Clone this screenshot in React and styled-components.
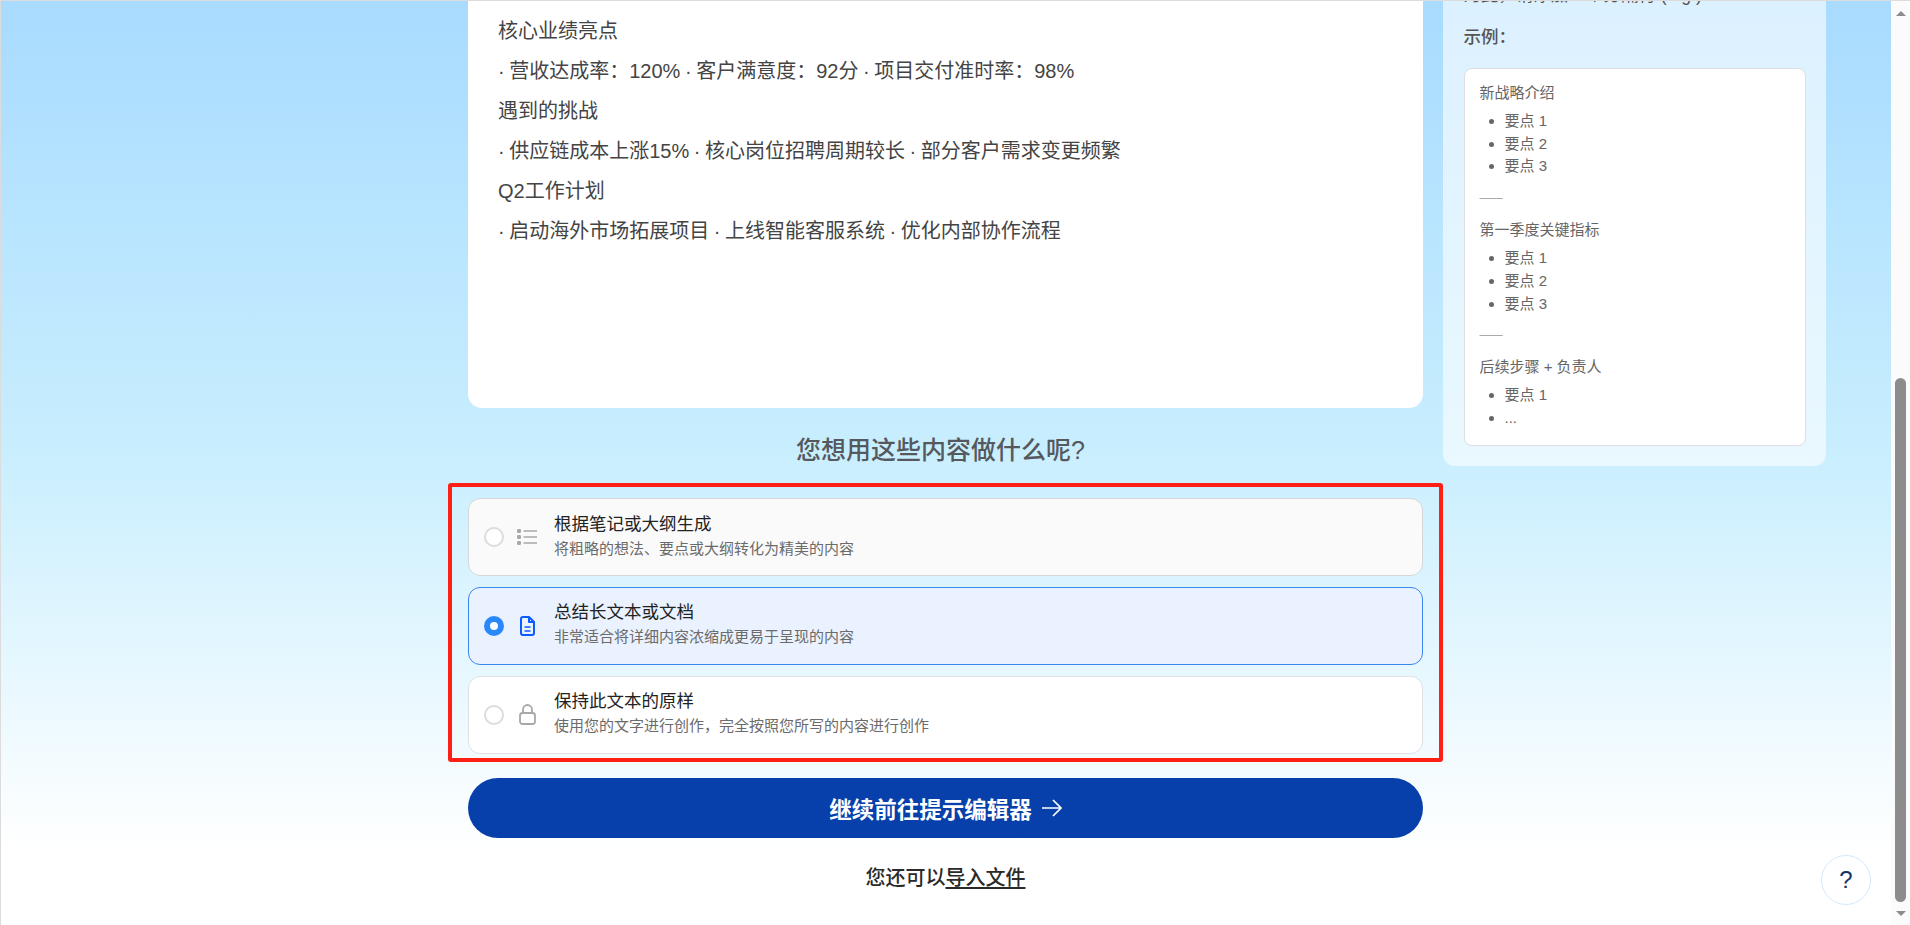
import React from 'react';
import styled, { createGlobalStyle } from 'styled-components';

// Styles

const FONT = '"Liberation Sans", "Noto Sans CJK SC", sans-serif';

const GlobalStyle = createGlobalStyle`
  html, body {
    margin: 0;
    padding: 0;
    height: 100%;
    overflow: hidden;
    font-family: ${FONT};
  }
`;

const Frame = styled.div`
  display: flex;
  width: 1910px;
  height: 925px;
  box-sizing: border-box;
  border-top: 1px solid #dcdcdc;
  border-left: 1px solid #dcdcdc;
  overflow: hidden;
  position: relative;
  background: #fff;
`;

const Viewport = styled.main`
  flex: 1;
  height: 100%;
  overflow: hidden;
  background: linear-gradient(180deg, #a8dbff 0%, #c8eefe 48%, #ffffff 92%);
`;

const Scrollbar = styled.div`
  width: 19px;
  height: 100%;
  flex: none;
  display: flex;
  flex-direction: column;
  align-items: center;
  background: #fbfbfb;
  border-top-right-radius: 8px;
`;

const ScrollArrow = styled.span`
  flex: none;
  height: 24px;
  display: flex;
  align-items: center;
  justify-content: center;

  &::before {
    content: '';
    border-left: 5px solid transparent;
    border-right: 5px solid transparent;
    ${({ $down }) => ($down ? 'border-top: 5px solid #8c8c8c;' : 'border-bottom: 5px solid #8c8c8c;')}
  }
`;

const ScrollTrack = styled.div`
  flex: 1;
  width: 11px;
  display: flex;
  flex-direction: column;
  justify-content: flex-end;
  margin-bottom: -1px;
`;

const ScrollThumb = styled.div`
  width: 11px;
  height: 524px;
  border-radius: 6px;
  background: #8c8c8c;
`;

const Content = styled.div`
  display: grid;
  grid-template-columns: 955px 383px;
  column-gap: 20px;
  align-items: start;
  padding-left: 467px;
  margin-top: -22px;
`;

const Column = styled.div`
  display: flex;
  flex-direction: column;
`;

const TextCard = styled.div`
  height: 429px;
  box-sizing: border-box;
  padding: 32px 30px 0;
  background: #fff;
  border-radius: 14px;
  color: #444;
  font-size: 20px;
  line-height: 40px;
  word-spacing: -1px;
`;

const Heading = styled.h2`
  margin: 26px 0 0;
  padding-right: 10px;
  height: 32px;
  text-align: center;
  color: #55595e;
  font-size: 25px;
  line-height: 32px;
  font-weight: 500;
`;

const Options = styled.div`
  display: flex;
  flex-direction: column;
  gap: 10.75px;
  margin-top: 32px;
  position: relative;
`;

const RedOutline = styled.div`
  position: absolute;
  inset: -15px -20px -8px -20px;
  border: 4px solid #ff2015;
  border-radius: 3px;
  pointer-events: none;
`;

const Option = styled.div`
  display: flex;
  align-items: center;
  height: 78px;
  box-sizing: border-box;
  padding-left: 15px;
  border-radius: 12px;
  border: 1px solid ${({ $tone }) => ({ muted: '#d3d6da', active: '#3b86f0', plain: '#dfe1e4' }[$tone])};
  background: ${({ $tone }) => ({ muted: '#fafafa', active: '#e9f2fe', plain: '#fff' }[$tone])};
`;

const Radio = styled.span`
  flex: none;
  width: 20px;
  height: 20px;
  box-sizing: border-box;
  border-radius: 50%;
  border: ${({ $on }) => ($on ? '6px solid #2b88fb' : '2px solid #dcdcdc')};
  background: #fff;
`;

const IconSlot = styled.span`
  flex: none;
  width: 24px;
  margin-left: 11px;
  display: flex;
  justify-content: center;
  color: ${({ $on }) => ($on ? '#0b5cff' : '#a8a8a8')};
`;

const OptionText = styled.div`
  margin-left: 15px;
  padding-bottom: 4px;
  display: flex;
  flex-direction: column;
  gap: 3px;
`;

const OptionTitle = styled.div`
  color: #222;
  font-size: 17.5px;
  line-height: 24px;
  font-weight: 400;
`;

const OptionSub = styled.div`
  color: #6b6b6b;
  font-size: 15px;
  line-height: 20px;
`;

const PrimaryButton = styled.button`
  margin-top: 24px;
  height: 60px;
  border: none;
  border-radius: 30px;
  background: #073fab;
  color: #fff;
  font-family: ${FONT};
  font-size: 22.5px;
  font-weight: 700;
  display: flex;
  align-items: center;
  justify-content: center;
  gap: 10px;
`;

const ImportLine = styled.div`
  margin-top: 26px;
  text-align: center;
  color: #2a2a2a;
  font-size: 20px;
  line-height: 28px;
  font-weight: 500;

  u {
    text-decoration-thickness: 2px;
    text-underline-offset: 2px;
    text-decoration-skip-ink: none;
  }
`;

const Sidebar = styled.aside`
  box-sizing: border-box;
  height: 487px;
  padding: 5px 20.5px 0;
  border-radius: 12px;
  background: rgba(255, 255, 255, 0.6);
  color: #555;
`;

const ClippedNote = styled.div`
  font-size: 17.5px;
  line-height: 22px;
  height: 22px;
  overflow: hidden;
  white-space: nowrap;
`;

const ExampleLabel = styled.div`
  margin-top: 18px;
  font-size: 17.5px;
  line-height: 26px;
  font-weight: 500;
`;

const ExampleBox = styled.div`
  margin-top: 18px;
  height: 378px;
  box-sizing: border-box;
  padding: 13px 15px 0;
  background: #fff;
  border: 1px solid #dcdfe3;
  border-radius: 8px;
  color: #666;
  font-size: 15px;
`;

const ExampleTitle = styled.div`
  line-height: 22px;
`;

const ExampleList = styled.ul`
  margin: 6px 0 0;
  padding: 0 0 0 25px;
  list-style: disc;
  line-height: 22.7px;
`;

const Rule = styled.div`
  margin: 8px 0 11px;
  color: #aaa;
  line-height: 22px;
  letter-spacing: -1px;
`;

const HelpButton = styled.button`
  position: absolute;
  left: 1820px;
  top: 854px;
  width: 50px;
  height: 50px;
  border-radius: 50%;
  border: 1px solid #d5e8fb;
  background: #fff;
  color: #17335f;
  font-family: ${FONT};
  font-size: 24px;
  padding: 0;
`;

// Icons

const ListIcon = () => (
  <svg width="20" height="16" viewBox="0 0 20 16" fill="none">
    <rect x="0" y="0" width="4" height="4" rx="1.2" fill="currentColor" />
    <rect x="0" y="6" width="4" height="4" rx="1.2" fill="currentColor" />
    <rect x="0" y="12" width="4" height="4" rx="1.2" fill="currentColor" />
    <path d="M6.5 2H20M6.5 8H20M6.5 14H20" stroke="currentColor" strokeWidth="1.6" />
  </svg>
);

const DocIcon = () => (
  <svg width="15" height="20" viewBox="0 0 15 20" fill="none" stroke="currentColor" strokeWidth="2" strokeLinejoin="round">
    <path d="M3 1H9L14 6V17A2 2 0 0 1 12 19H3A2 2 0 0 1 1 17V3A2 2 0 0 1 3 1Z" />
    <path d="M9 1V6H14" />
    <path d="M4.5 11H10.5M4.5 15H10.5" strokeWidth="1.6" />
  </svg>
);

const LockIcon = () => (
  <svg width="17" height="21" viewBox="0 0 17 21" fill="none" stroke="currentColor" strokeWidth="1.8">
    <rect x="1" y="9" width="15" height="11" rx="2.5" />
    <path d="M4 9V5.5A4.5 4.5 0 0 1 13 5.5V9" />
  </svg>
);

const ArrowIcon = () => (
  <svg width="20" height="18" viewBox="0 0 20 18" fill="none" stroke="currentColor" strokeWidth="1.7">
    <path d="M0 9H19M11 1L19 9L11 17" />
  </svg>
);

// Data

const OPTIONS = [
  { tone: 'muted', Icon: ListIcon, title: '根据笔记或大纲生成', sub: '将粗略的想法、要点或大纲转化为精美的内容' },
  { tone: 'active', Icon: DocIcon, title: '总结长文本或文档', sub: '非常适合将详细内容浓缩成更易于呈现的内容' },
  { tone: 'plain', Icon: LockIcon, title: '保持此文本的原样', sub: '使用您的文字进行创作，完全按照您所写的内容进行创作' },
];

const LINES = [
  '核心业绩亮点',
  '· 营收达成率：120% · 客户满意度：92分 · 项目交付准时率：98%',
  '遇到的挑战',
  '· 供应链成本上涨15% · 核心岗位招聘周期较长 · 部分客户需求变更频繁',
  'Q2工作计划',
  '· 启动海外市场拓展项目 · 上线智能客服系统 · 优化内部协作流程',
];

// Component

const App = () => (
  <Frame>
    <GlobalStyle />
    <Viewport>
      <Content>
        <Column>
          <TextCard>
            {LINES.map((line) => <div key={line}>{line}</div>)}
          </TextCard>
          <Heading>您想用这些内容做什么呢?</Heading>
          <Options>
            <RedOutline />
            {OPTIONS.map(({ tone, Icon, title, sub }) => (
              <Option key={title} $tone={tone}>
                <Radio $on={tone === 'active'} />
                <IconSlot $on={tone === 'active'}>
                  <Icon />
                </IconSlot>
                <OptionText>
                  <OptionTitle>{title}</OptionTitle>
                  <OptionSub>{sub}</OptionSub>
                </OptionText>
              </Option>
            ))}
          </Options>
          <PrimaryButton>
            继续前往提示编辑器
            <ArrowIcon />
          </PrimaryButton>
          <ImportLine>您还可以<u>导入文件</u></ImportLine>
        </Column>
        <Sidebar>
          <ClippedNote>为此，请添加一个分隔符 (e.g.)</ClippedNote>
          <ExampleLabel>示例：</ExampleLabel>
          <ExampleBox>
            <ExampleTitle>新战略介绍</ExampleTitle>
            <ExampleList>
              <li>要点 1</li>
              <li>要点 2</li>
              <li>要点 3</li>
            </ExampleList>
            <Rule>–––</Rule>
            <ExampleTitle>第一季度关键指标</ExampleTitle>
            <ExampleList>
              <li>要点 1</li>
              <li>要点 2</li>
              <li>要点 3</li>
            </ExampleList>
            <Rule>–––</Rule>
            <ExampleTitle>后续步骤 + 负责人</ExampleTitle>
            <ExampleList>
              <li>要点 1</li>
              <li>...</li>
            </ExampleList>
          </ExampleBox>
        </Sidebar>
      </Content>
    </Viewport>
    <Scrollbar>
      <ScrollArrow />
      <ScrollTrack><ScrollThumb /></ScrollTrack>
      <ScrollArrow $down />
    </Scrollbar>
    <HelpButton>?</HelpButton>
  </Frame>
);

export default App;
